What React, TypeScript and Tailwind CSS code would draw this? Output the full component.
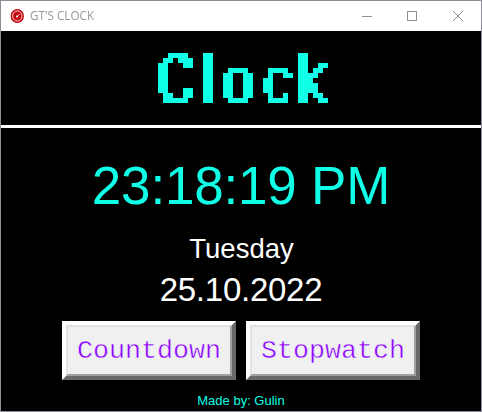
function TitleBar() {
  return (
    <header className="flex h-[30px] shrink-0 items-center bg-white pl-[9px] text-[#999999]">
      <svg width="14" height="14" viewBox="0 0 14 14" className="mr-[6px] shrink-0">
        <ellipse cx="7.3" cy="7" rx="6.7" ry="7" fill="#c4090f" />
        <ellipse cx="7.3" cy="7" rx="4.7" ry="5" fill="none" stroke="#f4d0d2" strokeWidth="1" />
        <path d="M7 7.6 9.4 5.2" stroke="#fff" strokeWidth="0.9" />
        <circle cx="7" cy="7.6" r="1" fill="#fff" />
      </svg>
      <span className="origin-left scale-x-[0.975] whitespace-nowrap font-['Open_Sans',sans-serif] text-[12px] leading-[16px]">GT'S CLOCK</span>
      <svg width="104" height="12" viewBox="0 0 104 12" className="ml-auto mr-[15px] shrink-0" fill="none" stroke="#909090" shapeRendering="crispEdges">
        <path d="M0 6.5h10M45.5 1.5h9v9h-9z" />
        <path d="M91 1l10 10M101 1 91 11" shapeRendering="auto" />
      </svg>
    </header>
  );
}

function PixelTitle() {
  return (
    <svg width="180" height="90" viewBox="0 -15 180 90" className="mt-[2px]">
      <defs>
        <filter id="mosaic" filterUnits="userSpaceOnUse" x="0" y="0" width="180" height="60" colorInterpolationFilters="sRGB">
          <feFlood x="2" y="2" width="1" height="1" floodColor="#000" />
          <feComposite in2="SourceGraphic" operator="over" x="0" y="0" width="5" height="5" />
          <feTile result="dots" x="0" y="0" width="180" height="60" />
          <feMorphology in="SourceGraphic" operator="dilate" radius="2 0" />
          <feComponentTransfer result="solid">
            <feFuncA type="discrete" tableValues="0 1" />
          </feComponentTransfer>
          <feComposite in="solid" in2="dots" operator="in" />
          <feMorphology operator="dilate" radius="2" result="mask" />
          <feFlood floodColor="#0fffe7" />
          <feComposite in2="mask" operator="in" />
        </filter>
      </defs>
      <g filter="url(#mosaic)">
        <text
          transform="scale(.76 1)"
          x="4 64.7 92.6 146.3 190.6"
          y="55.3"
          fill="#0fffe7"
          className="font-['Liberation_Sans',Arial,sans-serif] text-[69px]"
        >
          <tspan className="text-[70px]">C</tspan>loc<tspan className="text-[72px]">k</tspan>
        </text>
      </g>
    </svg>
  );
}

function ClockButton({ label }: { label: string }) {
  return (
    <button className="h-[59px] w-[174px] border-4 border-t-white border-l-white border-r-[#696969] border-b-[#696969] bg-[#f0f0f0] border-solid">
      <span className="flex h-full w-full items-center justify-center border-2 border-t-[#e3e3e3] border-l-[#e3e3e3] border-r-[#a0a0a0] border-b-[#a0a0a0] font-['Liberation_Mono','Courier_New',monospace] text-[26.67px] leading-[30px] text-[#8b00ff] [-webkit-text-stroke:0.45px_#f0f0f0]">
        {label}
      </span>
    </button>
  );
}

export default function App() {
  return (
    <div className="flex h-[412px] w-[482px] flex-col overflow-hidden border border-[#8e8e9b] bg-black font-['Liberation_Sans',Arial,sans-serif]">
      <TitleBar />
      <h1 className="flex h-[94px] shrink-0 justify-center pl-[4px]">
        <PixelTitle />
      </h1>
      <div className="h-[3px] shrink-0 bg-white" />
      <main className="flex flex-col items-center">
        <time className="mt-[28px] whitespace-nowrap text-[53px] leading-[60px] tracking-[-0.2px] text-[#0fffe7]">23:18:19 PM</time>
        <div className="mt-[18px] pl-[1px] text-[27.5px] leading-[30px] text-white">Tuesday</div>
        <div className="mt-[7px] text-[33px] leading-[38px] tracking-[-0.25px] text-white">25.10.2022</div>
        <div className="mt-[12px] flex gap-[10px]">
          <ClockButton label="Countdown" />
          <ClockButton label="Stopwatch" />
        </div>
        <footer className="mt-[13px] text-[13px] leading-[16px] text-[#0fffe7]">Made by: Gulin</footer>
      </main>
    </div>
  );
}
